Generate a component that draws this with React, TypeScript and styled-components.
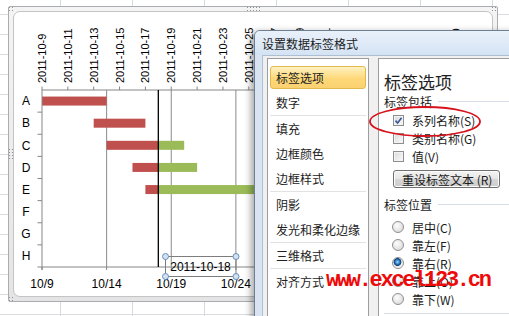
import styled, { createGlobalStyle } from "styled-components";

const GlobalStyle = createGlobalStyle`
  html, body {
    margin: 0;
    padding: 0;
    width: 509px;
    height: 316px;
    overflow: hidden;
    background: #fff;
  }
  body {
    font-family: "Noto Sans CJK SC", "Liberation Sans", sans-serif;
  }
`;

const Sheet = styled.div`
  position: relative;
  width: 509px;
  height: 316px;
  overflow: hidden;
  background-color: #fff;
  background-image: linear-gradient(to right, #d9dbde 1px, transparent 1px),
    linear-gradient(to bottom, #d9dbde 1px, transparent 1px);
  background-size: 72px 20px;
  background-position: 60px 0, 0 14px;
`;

/* ---------- chart object ---------- */

const ChartFrame = styled.div`
  position: absolute;
  left: 8px;
  top: 6px;
  width: 490px;
  height: 296px;
  box-sizing: border-box;
  padding: 4px;
  border: 1px solid #a9adb2;
  border-radius: 2px;
  background: linear-gradient(#f4f4f4, #e4e4e4);
`;

const ChartArea = styled.div`
  width: 100%;
  height: 100%;
  box-sizing: border-box;
  border: 1px solid #c4c4c4;
  border-radius: 7px;
  background: #fff;
  overflow: hidden;

  svg {
    display: block;
  }
`;

const Grip = styled.span<{ $x: number; $y: number; $w: number; $h: number }>`
  position: absolute;
  left: ${(p) => p.$x}px;
  top: ${(p) => p.$y}px;
  width: ${(p) => p.$w}px;
  height: ${(p) => p.$h}px;
  background-image: radial-gradient(circle, #8d9095 0.7px, transparent 1px);
  background-size: 3px 3px;
`;

const X0 = 42;
const DAY = 12.925;
const TOP = 90;
const BOTTOM = 267;
const ROW = (BOTTOM - TOP) / 8;
const RIGHT = 470;
const TODAY = 9;
const xAt = (d: number) => X0 + d * DAY;

const tasks = [
  { name: "A", start: 0, end: 5 },
  { name: "B", start: 4, end: 8 },
  { name: "C", start: 5, end: 11 },
  { name: "D", start: 7, end: 12 },
  { name: "E", start: 8, end: 20 },
  { name: "F" },
  { name: "G" },
  { name: "H" },
];

const dayDate = (d: number) => new Date(2011, 9, 9 + d);

const GanttChart = () => {
  const topTicks = Array.from({ length: 17 }, (_, k) => k * 2);
  const majors = [0, 5, 10, 15, 20, 25, 30];
  // only the labels left of the dialog are drawn
  const labelled = [0, 5, 10, 15];

  return (
    <svg width={478} height={284} viewBox="14 12 478 284">
      {majors.slice(1).map((d) => (
        <line key={d} x1={xAt(d)} y1={TOP} x2={xAt(d)} y2={BOTTOM} stroke="#8a8a8a" />
      ))}

      {tasks.map((t, i) => {
        if (t.start === undefined || t.end === undefined) return null;
        const y = TOP + ROW * (i + 0.5) - 4.5;
        const redEnd = Math.min(t.end, TODAY);
        return (
          <g key={t.name}>
            <rect x={xAt(t.start)} y={y} width={xAt(redEnd) - xAt(t.start)} height={9} fill="#c0504d" />
            {t.end > TODAY && (
              <rect x={xAt(TODAY)} y={y} width={xAt(t.end) - xAt(TODAY)} height={9} fill="#9bbb59" />
            )}
          </g>
        );
      })}

      <line x1={X0} y1={TOP} x2={RIGHT} y2={TOP} stroke="#868686" />
      <line x1={X0} y1={BOTTOM} x2={RIGHT} y2={BOTTOM} stroke="#868686" />
      <line x1={X0} y1={TOP} x2={X0} y2={BOTTOM + 3} stroke="#868686" />
      <line x1={xAt(TODAY)} y1={TOP} x2={xAt(TODAY)} y2={BOTTOM} stroke="#000" strokeWidth={1.3} />

      {topTicks.map((d) => {
        const date = dayDate(d);
        const x = xAt(d);
        return (
          <g key={d}>
            <line x1={x} y1={86.5} x2={x} y2={TOP} stroke="#868686" />
            <text
              x={x}
              y={83}
              dy="0.36em"
              transform={`rotate(-90 ${x} 83)`}
              fontFamily="Liberation Sans, sans-serif"
              fontSize={11}
              fill="#000"
            >
              {`2011-${date.getMonth() + 1}-${date.getDate()}`}
            </text>
          </g>
        );
      })}

      {majors.map((d) => (
        <line key={d} x1={xAt(d)} y1={BOTTOM} x2={xAt(d)} y2={BOTTOM + 3} stroke="#868686" />
      ))}
      {labelled.map((d) => {
        const date = dayDate(d);
        return (
          <text
            key={d}
            x={xAt(d)}
            y={288}
            textAnchor="middle"
            fontFamily="Liberation Sans, sans-serif"
            fontSize={12}
            fill="#000"
          >
            {`${date.getMonth() + 1}/${date.getDate()}`}
          </text>
        );
      })}

      {tasks.map((t, i) => (
        <g key={t.name}>
          <line x1={37.5} y1={TOP + ROW * (i + 1)} x2={X0} y2={TOP + ROW * (i + 1)} stroke="#868686" />
          <text
            x={26}
            y={TOP + ROW * (i + 0.5) + 4.3}
            textAnchor="middle"
            fontFamily="Liberation Sans, sans-serif"
            fontSize={12}
            fill="#000"
          >
            {t.name}
          </text>
        </g>
      ))}

      <rect x={165.5} y={256.5} width={70.5} height={20} fill="none" stroke="#7d7d7d" />
      <text
        x={200.5}
        y={270.5}
        textAnchor="middle"
        fontFamily="Liberation Sans, sans-serif"
        fontSize={12}
        fill="#000"
      >
        2011-10-18
      </text>
      {[
        [165.5, 256.5],
        [236, 256.5],
        [165.5, 276.5],
        [236, 276.5],
      ].map(([cx, cy]) => (
        <circle key={`${cx}-${cy}`} cx={cx} cy={cy} r={3} fill="#d3e2f3" stroke="#6a8db8" />
      ))}
    </svg>
  );
};

/* ---------- format dialog ---------- */

const Dialog = styled.div`
  position: absolute;
  left: 254px;
  top: 30px;
  width: 290px;
  height: 300px;
  display: flex;
  flex-direction: column;
  background: #d8e4f2;
  border: 1px solid #6f7f93;
  border-top-left-radius: 6px;
  box-shadow: -3px 2px 7px rgba(0, 0, 0, 0.35);
`;

const TitleBar = styled.div`
  flex: none;
  height: 24px;
  display: flex;
  align-items: center;
  padding-left: 7px;
  font-size: 12px;
  color: #1b1b1b;
  border-top-left-radius: 5px;
  background: linear-gradient(#e9f1fa, #d4e3f4);
`;

const Client = styled.div`
  flex: 1;
  display: flex;
  gap: 9px;
  margin-left: 7px;
  padding: 2px 0 0 4px;
  background: #f0f0f0;
  border-left: 1px solid #afbfd2;
  border-top: 1px solid #afbfd2;
`;

const NavPanel = styled.div`
  flex: none;
  width: 102px;
  box-sizing: border-box;
  display: flex;
  flex-direction: column;
  padding-top: 6px;
  background: #fff;
  border: 1px solid #9d9d9d;
  border-bottom: none;
`;

const NavItem = styled.div<{ $active?: boolean }>`
  height: 23px;
  margin: 1px 2px;
  box-sizing: border-box;
  padding-left: 5px;
  display: flex;
  align-items: center;
  font-size: 12px;
  color: #222;
  white-space: nowrap;
  border: 1px solid ${(p) => (p.$active ? "#e2b950" : "transparent")};
  border-radius: 3px;
  background: ${(p) => (p.$active ? "linear-gradient(#fff1c2, #fdd878 55%, #fbd170)" : "none")};
`;

const NavSeparator = styled.div`
  height: 1px;
  margin: 0 2px;
  background: #e2e2e2;
`;

const OptionsPanel = styled.div`
  flex: 1;
  box-sizing: border-box;
  display: flex;
  flex-direction: column;
  padding: 12px 0 0 5px;
  background: #fff;
  border: 1px solid #9d9d9d;
  border-right: none;
  border-bottom: none;
  font-size: 12px;
  color: #1a1a1a;
`;

const PanelHeading = styled.div`
  font-size: 17px;
  line-height: 22px;
  color: #222;
`;

const SectionTitle = styled.div<{ $gap?: number }>`
  display: flex;
  align-items: center;
  gap: 6px;
  height: 16px;
  margin-top: ${(p) => p.$gap ?? 0}px;

  &::after {
    content: "";
    flex: 1;
    height: 1px;
    background: #d6dde6;
  }
`;

const OptionRow = styled.label<{ $gap?: number }>`
  display: flex;
  align-items: center;
  gap: 8px;
  height: 18px;
  margin-left: 9px;
  margin-top: ${(p) => p.$gap ?? 0}px;
  white-space: nowrap;
`;

const CheckBox = styled.span`
  flex: none;
  width: 11px;
  height: 11px;
  box-sizing: border-box;
  border: 1px solid #8e8f8f;
  background: linear-gradient(135deg, #d9d9d9, #fbfbfb);
  box-shadow: inset 0 0 0 1px #f3f3f3;
  display: flex;

  svg {
    display: block;
  }
`;

const Radio = styled.span<{ $checked?: boolean }>`
  flex: none;
  width: 12px;
  height: 12px;
  margin-left: -1px;
  box-sizing: border-box;
  border-radius: 50%;
  border: 1px solid #8f8f8f;
  background: ${(p) =>
    p.$checked
      ? "radial-gradient(circle at 45% 40%, #a9dcfb 0, #2b7cc4 2.2px, #0e3f74 3.6px, #e6e6e6 4.2px, #fbfbfb 6px)"
      : "radial-gradient(circle at 40% 35%, #fdfdfd, #d3d3d3)"};
`;

const Button = styled.button`
  align-self: flex-start;
  width: 107px;
  height: 18px;
  margin: 5px 0 0 9px;
  padding: 0 0 0 8px;
  box-sizing: border-box;
  text-align: left;
  font: inherit;
  font-size: 12px;
  color: #1a1a1a;
  border: 1px solid #707070;
  border-radius: 3px;
  background: linear-gradient(#f3f3f3, #e6e6e6 50%, #d6d6d6 51%, #cdcdcd);
  box-shadow: inset 0 0 0 1px #fcfcfc;
  white-space: nowrap;
`;

const PanelRule = styled.div`
  height: 1px;
  margin-top: 5px;
  background: #d6dde6;
`;

/* ---------- annotations ---------- */

const Annotation = styled.svg`
  position: absolute;
  left: 366px;
  top: 104px;
  overflow: visible;
`;

const Watermark = styled.div`
  position: absolute;
  left: 326px;
  top: 270px;
  font-family: "Liberation Mono", monospace;
  font-weight: bold;
  font-size: 22px;
  line-height: 22px;
  letter-spacing: -2.3px;
  color: #ee0a0a;
  white-space: nowrap;
`;

const navGroups = [
  ["标签选项", "数字"],
  ["填充", "边框颜色", "边框样式"],
  ["阴影", "发光和柔化边缘"],
  ["三维格式"],
  ["对齐方式"],
];

const checks = [
  { label: "系列名称(S)", checked: true },
  { label: "类别名称(G)", checked: false },
  { label: "值(V)", checked: false },
];

const positions = [
  { label: "居中(C)", checked: false },
  { label: "靠左(F)", checked: false },
  { label: "靠右(R)", checked: true },
  { label: "靠上(O)", checked: false },
  { label: "靠下(W)", checked: false },
];

const App = () => {
  return (
    <Sheet>
      <GlobalStyle />
      <ChartFrame>
        <ChartArea>
          <GanttChart />
        </ChartArea>
      </ChartFrame>
      <Grip $x={8} $y={6} $w={6} $h={6} />
      <Grip $x={246} $y={6} $w={15} $h={5} />
      <Grip $x={491} $y={6} $w={6} $h={6} />
      <Grip $x={8} $y={296} $w={6} $h={6} />
      <Grip $x={8} $y={148} $w={5} $h={12} />

      <Dialog>
        <TitleBar>设置数据标签格式</TitleBar>
        <Client>
          <NavPanel>
            {navGroups.map((group, gi) => (
              <div key={gi} style={{ display: "contents" }}>
                {gi > 0 && <NavSeparator />}
                {group.map((item) => (
                  <NavItem key={item} $active={item === "标签选项"}>
                    {item}
                  </NavItem>
                ))}
              </div>
            ))}
          </NavPanel>
          <OptionsPanel>
            <PanelHeading>标签选项</PanelHeading>
            <SectionTitle>标签包括</SectionTitle>
            {checks.map((c, i) => (
              <OptionRow key={c.label} $gap={i === 0 ? 2 : 0}>
                <CheckBox>
                  {c.checked && (
                    <svg width={9} height={9} viewBox="0 0 9 9">
                      <path d="M1.5 4.6 L3.6 7 L7.6 1.8" fill="none" stroke="#39579a" strokeWidth={1.6} />
                    </svg>
                  )}
                </CheckBox>
                {c.label}
              </OptionRow>
            ))}
            <Button>重设标签文本 (R)</Button>
            <SectionTitle $gap={8}>标签位置</SectionTitle>
            {positions.map((r, i) => (
              <OptionRow key={r.label} $gap={i === 0 ? 6 : 0}>
                <Radio $checked={r.checked} />
                {r.label}
              </OptionRow>
            ))}
            <PanelRule />
          </OptionsPanel>
        </Client>
      </Dialog>

      <Annotation width={120} height={36} viewBox="0 0 120 36">
        <ellipse cx={59} cy={17.5} rx={55} ry={14.5} fill="none" stroke="#d8121c" strokeWidth={1.8} />
      </Annotation>
      <Watermark>www.excel123.cn</Watermark>
    </Sheet>
  );
};

export default App;
